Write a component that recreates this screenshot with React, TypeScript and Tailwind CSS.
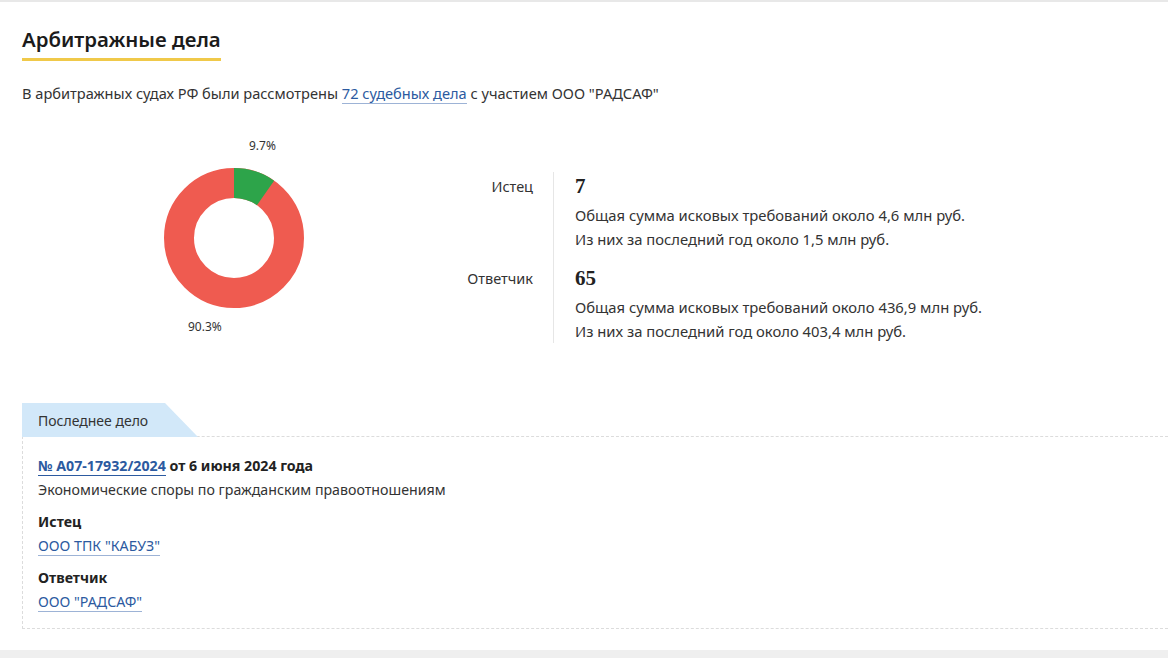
import React from 'react';

const font = { fontFamily: '"Noto Sans", "Open Sans", sans-serif' };

function Donut() {
  const r = 55;
  const c = 2 * Math.PI * r;
  const green = 0.097 * c;
  return (
    <div className="relative h-[220px] w-[424px]">
      <span className="absolute left-[227px] top-[7px] text-[12px] leading-[16px] text-[#333]">9.7%</span>
      <svg className="absolute left-[142px] top-[37px]" width="140" height="140" viewBox="0 0 140 140">
        <circle cx="70" cy="70" r={r} fill="none" stroke="#ef5b50" strokeWidth="30" />
        <circle
          cx="70"
          cy="70"
          r={r}
          fill="none"
          stroke="#2da44a"
          strokeWidth="30"
          strokeDasharray={`${green} ${c}`}
          transform="rotate(-90 70 70)"
        />
      </svg>
      <span className="absolute left-[166px] top-[188px] text-[12px] leading-[16px] text-[#333]">90.3%</span>
    </div>
  );
}

function Stat({ label, count, total, year }: { label: string; count: string; total: string; year: string }) {
  return (
    <>
      <div className="pr-5 text-right text-[14.5px] leading-[28px] text-[#333]">{label}</div>
      <div className="border-l border-[#e6e6e6] pl-[21px]">
        <div className="mb-[3px] text-[21px] font-bold leading-[28px] text-[#222]" style={{ fontFamily: '"Liberation Serif", serif' }}>
          {count}
        </div>
        <div className="text-[14.8px] leading-[24px] text-[#333]">{total}</div>
        <div className="text-[14.8px] leading-[24px] text-[#333]">{year}</div>
      </div>
    </>
  );
}

export default function App() {
  return (
    <div className="min-h-screen bg-[#efefef]" style={font}>
      <div className="border-t-2 border-[#e8e8e8] bg-white pb-[21px] pl-[22px] pt-[22px]">
        <h2 className="inline-block border-b-[3px] border-[#f0c94a] pb-[4px] text-[20.4px] font-semibold leading-[30px] text-[#1b1b1b]">
          Арбитражные дела
        </h2>

        <p className="mt-[22px] text-[14.6px] leading-[20px] text-[#333]">
          В арбитражных судах РФ были рассмотрены{' '}
          <a href="#" className="border-b border-[#9db3d6] text-[#2c5aa0]">72 судебных дела</a> с участием ООО "РАДСАФ"
        </p>

        <div className="mt-[28px] flex">
          <Donut />
          <div className="pt-[41px]">
            <div className="grid grid-cols-[107px_1fr]">
              <Stat
                label="Истец"
                count="7"
                total="Общая сумма исковых требований около 4,6 млн руб."
                year="Из них за последний год около 1,5 млн руб."
              />
              <div className="h-[13px]" />
              <div className="h-[13px] border-l border-[#e6e6e6]" />
              <Stat
                label="Ответчик"
                count="65"
                total="Общая сумма исковых требований около 436,9 млн руб."
                year="Из них за последний год около 403,4 млн руб."
              />
            </div>
          </div>
        </div>

        <div className="mt-[52px]">
          <div className="flex h-[34px] w-[176px] items-center bg-[#d2e8f9] pl-4 text-[14px] text-[#333] [clip-path:polygon(0_0,143px_0,100%_100%,0_100%)]">
            Последнее дело
          </div>
          <div className="-mt-px border-b border-l border-t border-dashed border-[#dcdcdc] pb-[14px] pl-[15px] pt-[17px] text-[14.2px] leading-[24px] text-[#222]">
            <div>
              <a href="#" className="border-b border-[#2c5aa0] font-bold text-[#2c5aa0]">№ А07-17932/2024</a>{' '}
              <span className="font-bold">от 6 июня 2024 года</span>
            </div>
            <div className="text-[#333]">Экономические споры по гражданским правоотношениям</div>
            <div className="mt-2 font-bold">Истец</div>
            <div>
              <a href="#" className="border-b border-[#9db3d6] text-[#2c5aa0]">ООО ТПК "КАБУЗ"</a>
            </div>
            <div className="mt-2 font-bold">Ответчик</div>
            <div>
              <a href="#" className="border-b border-[#9db3d6] text-[#2c5aa0]">ООО "РАДСАФ"</a>
            </div>
          </div>
        </div>
      </div>
    </div>
  );
}
